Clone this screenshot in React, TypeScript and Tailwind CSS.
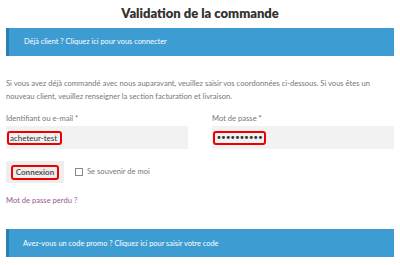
export default function App() {
  return (
    <div className="w-[400px] h-[265px] bg-white overflow-hidden px-[6px] text-[#777]" style={{ fontFamily: "Lato, 'Open Sans', sans-serif" }}>
      <h1 className="text-center font-extrabold text-[13px] text-[#333] pt-[3px] h-[28px] leading-[20px]">Validation de la commande</h1>
      <div className="h-[28px] bg-[#3d9cd2] border-l-[3px] border-[#2b7fb5] flex items-center pl-[15px] text-white text-[7.4px]">
        Déjà client ? Cliquez ici pour vous connecter
      </div>
      <p className="mt-[21px] text-[7.6px] leading-[13px]">
        Si vous avez déjà commandé avec nous auparavant, veuillez saisir vos coordonnées ci-dessous. Si vous êtes un nouveau client, veuillez renseigner la section facturation et livraison.
      </p>
      <div className="mt-[9px] flex gap-[24px]">
        <div className="flex-1">
          <div className="text-[7.6px] leading-[13px]">Identifiant ou e-mail <span className="text-[#e2401c]">*</span></div>
          <div className="mt-[1px] h-[23px] bg-[#f2f2f2] flex items-center pl-[1px]">
            <span className="border-2 border-[#e00] rounded-[3px] h-[14px] w-[55px] flex items-center pl-[1px] text-[8px] text-[#333]">acheteur-test</span>
          </div>
        </div>
        <div className="flex-1">
          <div className="text-[7.6px] leading-[13px]">Mot de passe <span className="text-[#e2401c]">*</span></div>
          <div className="mt-[1px] h-[23px] bg-[#f2f2f2] flex items-center pl-[1px]">
            <span className="border-2 border-[#e00] rounded-[3px] h-[14px] w-[53px] flex items-center pl-[1px] text-[10px] leading-none text-[#333] tracking-[-1.3px]" style={{ fontFamily: "'DejaVu Sans', sans-serif" }}>••••••••••</span>
          </div>
        </div>
      </div>
      <div className="mt-[12px] flex items-center">
        <div className="w-[58px] h-[22px] bg-[#eeeeee] flex items-center justify-center">
          <span className="border-2 border-[#e00] rounded-[3px] h-[15px] px-[3px] flex items-center text-[8px] font-bold text-[#515151]">Connexion</span>
        </div>
        <span className="ml-[11px] w-[8px] h-[8px] border border-[#888] bg-white"></span>
        <span className="ml-[4px] text-[7.6px]">Se souvenir de moi</span>
      </div>
      <div className="mt-[12px] text-[7.6px] text-[#96588a]">Mot de passe perdu ?</div>
      <div className="mt-[23px] h-[28px] bg-[#3d9cd2] border-l-[3px] border-[#2b7fb5] flex items-center pl-[14px] text-white text-[7.4px]">
        Avez-vous un code promo ? Cliquez ici pour saisir votre code
      </div>
    </div>
  );
}
